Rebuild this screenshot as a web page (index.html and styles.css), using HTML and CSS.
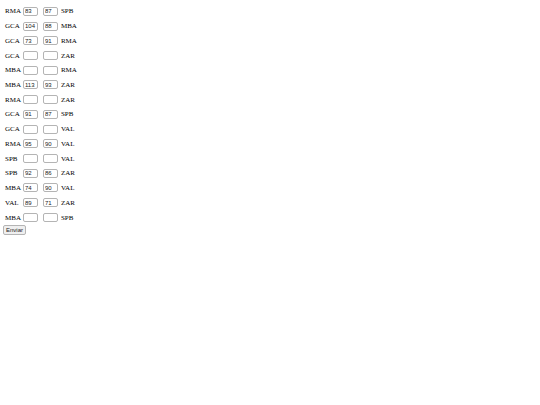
FILE: index.html
```html
<!DOCTYPE html>
<html lang="es">
<head>
<meta charset="utf-8">
<title>Resultados</title>
<link rel="stylesheet" href="styles.css">
</head>
<body>
<form>
<table class="games">
<tbody>
<tr><td>RMA</td><td><input class="score" aria-label="RMA" value="83"></td><td><input class="score" aria-label="SPB" value="87"></td><td>SPB</td></tr>
<tr><td>GCA</td><td><input class="score" aria-label="GCA" value="104"></td><td><input class="score" aria-label="MBA" value="88"></td><td>MBA</td></tr>
<tr><td>GCA</td><td><input class="score" aria-label="GCA" value="73"></td><td><input class="score" aria-label="RMA" value="91"></td><td>RMA</td></tr>
<tr><td>GCA</td><td><input class="score" aria-label="GCA"></td><td><input class="score" aria-label="ZAR"></td><td>ZAR</td></tr>
<tr><td>MBA</td><td><input class="score" aria-label="MBA"></td><td><input class="score" aria-label="RMA"></td><td>RMA</td></tr>
<tr><td>MBA</td><td><input class="score" aria-label="MBA" value="113"></td><td><input class="score" aria-label="ZAR" value="93"></td><td>ZAR</td></tr>
<tr><td>RMA</td><td><input class="score" aria-label="RMA"></td><td><input class="score" aria-label="ZAR"></td><td>ZAR</td></tr>
<tr><td>GCA</td><td><input class="score" aria-label="GCA" value="91"></td><td><input class="score" aria-label="SPB" value="87"></td><td>SPB</td></tr>
<tr><td>GCA</td><td><input class="score" aria-label="GCA"></td><td><input class="score" aria-label="VAL"></td><td>VAL</td></tr>
<tr><td>RMA</td><td><input class="score" aria-label="RMA" value="95"></td><td><input class="score" aria-label="VAL" value="90"></td><td>VAL</td></tr>
<tr><td>SPB</td><td><input class="score" aria-label="SPB"></td><td><input class="score" aria-label="VAL"></td><td>VAL</td></tr>
<tr><td>SPB</td><td><input class="score" aria-label="SPB" value="92"></td><td><input class="score" aria-label="ZAR" value="86"></td><td>ZAR</td></tr>
<tr><td>MBA</td><td><input class="score" aria-label="MBA" value="74"></td><td><input class="score" aria-label="VAL" value="90"></td><td>VAL</td></tr>
<tr><td>VAL</td><td><input class="score" aria-label="VAL" value="89"></td><td><input class="score" aria-label="ZAR" value="71"></td><td>ZAR</td></tr>
<tr><td>MBA</td><td><input class="score" aria-label="MBA"></td><td><input class="score" aria-label="SPB"></td><td>SPB</td></tr>
</tbody>
</table>
<button class="send" type="button">Enviar</button>
</form>
</body>
</html>
```
FILE: styles.css
```css
body {
  margin: 4px 3px;
  background: #fff;
  color: #000;
  font: 7px/8px "Liberation Serif", serif;
}

.games {
  height: 221px;
  border-collapse: collapse;
}

.games td {
  padding: 0 3px 0 2px;
  vertical-align: middle;
}

.games td:first-child {
  padding-right: 0;
}

.games td:last-child {
  padding-left: 0;
}

.score {
  display: block;
  box-sizing: border-box;
  width: 15px;
  height: 9px;
  margin: 0;
  padding: 0 1px;
  border: 1px solid #b4b4b4;
  border-radius: 2px;
  background: #fff;
  color: #222;
  font: 6px/7px "Liberation Sans", sans-serif;
}

.send {
  display: block;
  box-sizing: border-box;
  height: 10px;
  padding: 0 2px;
  border: 1px solid #b4b4b4;
  border-radius: 2px;
  background: #efefef;
  color: #222;
  font: 6px/8px "Liberation Sans", sans-serif;
}
```
